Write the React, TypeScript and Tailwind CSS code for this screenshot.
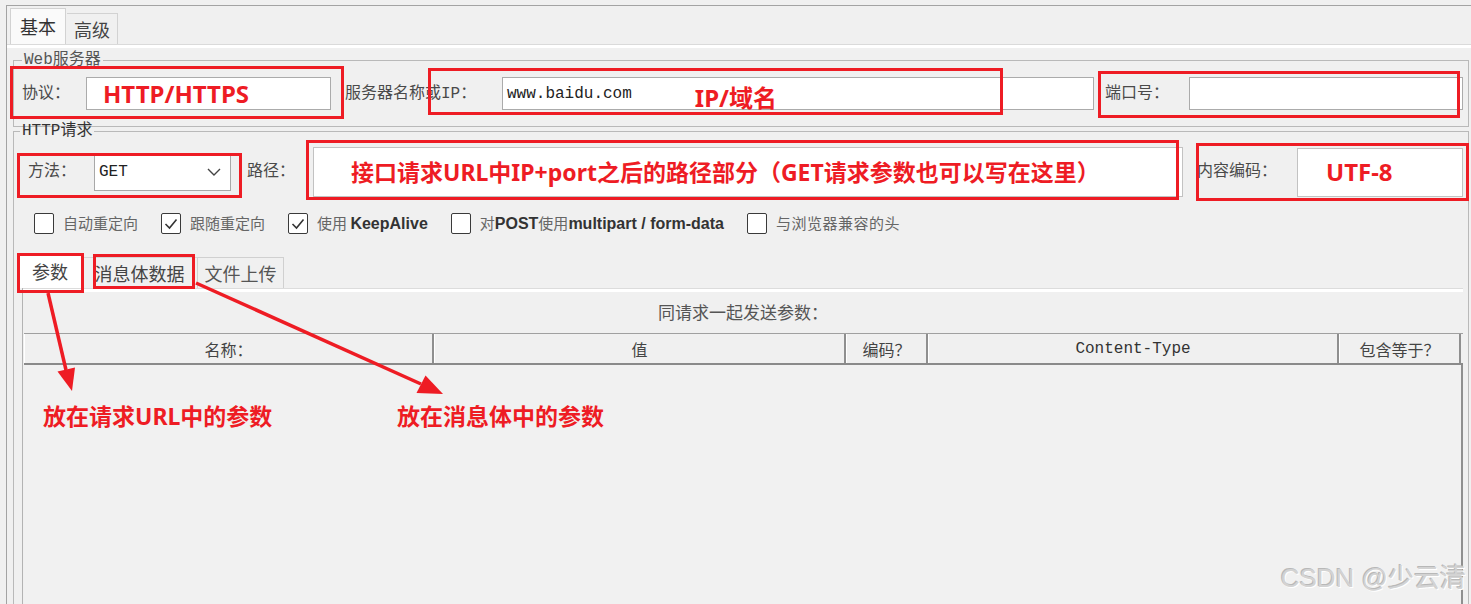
import React from "react";

const UI = "font-['Liberation_Mono','Noto_Sans_CJK_SC',monospace]";
const CJK = "font-['Noto_Sans_CJK_SC',sans-serif]";
const ANN = "font-['Noto_Sans','Noto_Sans_CJK_SC',sans-serif] font-bold text-[#ee1c24]";
const LAT = "font-['Liberation_Sans','Noto_Sans_CJK_SC',sans-serif] font-bold text-[#333]";

function Check({ checked }: { checked?: boolean }) {
  return (
    <div className="w-[20px] h-[21px] border-[1.5px] border-[#3a3a3a] bg-white rounded-[2px] flex items-center justify-center shrink-0">
      {checked && (
        <svg width="16" height="16" viewBox="0 0 16 16">
          <path d="M2.5 8 L6.5 12 L13.5 3.5" fill="none" stroke="#333" strokeWidth="1.6" />
        </svg>
      )}
    </div>
  );
}

export default function App() {
  return (
    <div className={`relative w-[1471px] h-[604px] overflow-hidden bg-[#f0f0f0] ${CJK}`}>
      <div className="ml-[6px] mt-[5px] h-[620px] border-l border-t border-[#a3a3a3] flex flex-col">
        {/* top tabs */}
        <div className="flex items-end pl-[3px] h-[38px] shrink-0">
          <div className="w-[56px] h-[36px] bg-[#fafafa] border-l border-t border-r border-[#d2d2d2] flex items-center justify-center text-[18px] text-[#333]">
            基本
          </div>
          <div className="ml-[1px] w-[51px] h-[31px] bg-[#f0f0f0] border-t border-r border-[#d2d2d2] flex items-center justify-center text-[18px] text-[#444]">
            高级
          </div>
        </div>
        {/* main panel */}
        <div className="flex-1 flex flex-col border-t border-[#dadada]">
          <div className="h-[3px] bg-white shrink-0" />
          {/* Web server fieldset */}
          <fieldset className="mt-[4px] ml-[6px] w-[1456px] border border-[#b9b9b9] pl-[8px] pb-[16px] shrink-0">
            <legend className={`px-[2px] text-[16px] leading-[16px] text-[#555] ${UI}`}>Web服务器</legend>
            <div className="flex items-center pt-[9px] h-[42px] text-[16px] text-[#4a4a4a]">
              <div className={`w-[64px] ${UI}`}>协议：</div>
              <div className="w-[245px] h-[33px] bg-white border border-[#ababab] flex items-center pl-[16px]">
                <span className={`text-[24px] leading-none ${ANN}`}>HTTP/HTTPS</span>
              </div>
              <div className={`ml-[14px] w-[157px] ${UI}`}>服务器名称或IP：</div>
              <div className="w-[592px] h-[33px] bg-white border border-[#ababab] flex items-center pl-[4px]">
                <span className={`text-[16px] text-[#222] ${UI}`}>www.baidu.com</span>
                <span className={`ml-[63px] mt-[8px] text-[24px] leading-none ${ANN}`}>IP/域名</span>
              </div>
              <div className={`ml-[11px] w-[84px] ${UI}`}>端口号：</div>
              <div className="w-[274px] h-[33px] bg-white border border-[#ababab]" />
            </div>
          </fieldset>
          {/* HTTP request fieldset */}
          <fieldset className="-mt-[4px] ml-[6px] w-[1456px] h-[520px] border border-[#b9b9b9] pl-[4px]">
            <legend className={`ml-[2px] px-[2px] text-[16px] leading-[16px] text-[#333] ${UI}`}>HTTP请求</legend>
            <div className="flex items-center pt-[8px] h-[58px] text-[16px] text-[#4a4a4a]">
              <div className={`ml-[10px] w-[66px] ${UI}`}>方法：</div>
              <div className="w-[137px] h-[38px] bg-white border border-[#a8a8a8] flex items-center justify-between pl-[4px] pr-[9px]">
                <span className={`text-[16px] text-[#222] ${UI}`}>GET</span>
                <svg width="14" height="8" viewBox="0 0 14 8">
                  <path d="M1 1 L7 7 L13 1" fill="none" stroke="#444" strokeWidth="1.4" />
                </svg>
              </div>
              <div className={`ml-[16px] w-[66px] ${UI}`}>路径：</div>
              <div className="w-[870px] h-[50px] bg-white border border-[#c2c2c2] flex items-center pl-[37px]">
                <span className={`text-[23px] leading-none ${ANN}`}>接口请求URL中IP+port之后的路径部分（GET请求参数也可以写在这里）</span>
              </div>
              <div className={`ml-[14px] w-[100px] ${UI}`}>内容编码：</div>
              <div className="w-[166px] h-[49px] bg-white border border-[#c2c2c2] flex items-center pl-[28px]">
                <span className={`text-[24px] leading-none ${ANN}`}>UTF-8</span>
              </div>
            </div>
            {/* checkboxes */}
            <div className="mt-[16px] h-[21px] pl-[16px] flex items-center gap-[23px] text-[15px] text-[#666]">
              <div className="flex items-center gap-[9px]">
                <Check />
                <span>自动重定向</span>
              </div>
              <div className="flex items-center gap-[9px]">
                <Check checked />
                <span>跟随重定向</span>
              </div>
              <div className="flex items-center gap-[9px]">
                <Check checked />
                <span>
                  使用 <span className={`text-[16px] ${LAT}`}>KeepAlive</span>
                </span>
              </div>
              <div className="flex items-center gap-[9px]">
                <Check />
                <span>
                  对<span className={`text-[16px] ${LAT}`}>POST</span>使用<span className={`text-[16px] ${LAT}`}>multipart / form-data</span>
                </span>
              </div>
              <div className="flex items-center gap-[9px]">
                <Check />
                <span className="tracking-[0.5px]">与浏览器兼容的头</span>
              </div>
            </div>
            {/* inner tabs */}
            <div className="mt-[21px] h-[33px] flex items-end text-[18px]">
              <div className="w-[64px] h-[34px] bg-white border-l border-t border-r border-[#d0d0d0] flex items-center justify-center text-[#444]">
                参数
              </div>
              <div className="w-[115px] h-[31px] bg-[#f0f0f0] border-t border-[#d6d6d6] flex items-center justify-center text-[#444]">
                消息体数据
              </div>
              <div className="w-[87px] h-[31px] bg-[#f0f0f0] border-l border-t border-r border-[#d0d0d0] flex items-center justify-center text-[#555]">
                文件上传
              </div>
            </div>
            {/* inner panel */}
            <div className="ml-[4px] w-[1441px] h-[340px] flex flex-col border-l border-[#b3b3b3]">
              <div className="h-[4px] bg-white border-t border-[#dcdcdc] shrink-0" />
              <div className="mt-[9px] h-[22px] leading-[22px] text-center text-[17px] text-[#555] shrink-0">同请求一起发送参数：</div>
              <div className="mt-[10px] ml-[1px] w-[1439px] flex-1 flex flex-col">
                <div className="flex shrink-0 border-t border-[#a0a0a0] border-b-[2px] border-b-[#8a8a8a] h-[32px] text-[16px] text-[#444]">
                  <div className="w-[410px] border-l border-l-white border-r-[2px] border-r-[#8f8f8f] flex items-center justify-center">名称：</div>
                  <div className="w-[412px] border-l border-l-white border-r-[2px] border-r-[#8f8f8f] flex items-center justify-center">值</div>
                  <div className="w-[82px] border-l border-l-white border-r-[2px] border-r-[#8f8f8f] flex items-center justify-center">编码？</div>
                  <div className={`w-[411px] border-l border-l-white border-r-[2px] border-r-[#8f8f8f] flex items-center justify-center text-[#333] ${UI}`}>Content-Type</div>
                  <div className="w-[122px] border-l border-l-white border-r-[2px] border-r-[#8f8f8f] flex items-center justify-center">包含等于？</div>
                </div>
                <div className="flex-1 border-r-[2px] border-[#8f8f8f] bg-[#f1f1f1] pl-[19px] pt-[36px] flex items-start">
                  <div className="w-[354px]">
                    <span className={`text-[23px] leading-[30px] ${ANN}`}>放在请求URL中的参数</span>
                  </div>
                  <span className={`text-[23px] leading-[30px] ${ANN}`}>放在消息体中的参数</span>
                </div>
              </div>
            </div>
          </fieldset>
        </div>
      </div>

      {/* annotation red boxes */}
      <div className="absolute left-[10px] top-[66px] w-[334px] h-[53px] border-[3px] border-[#ee1c24]" />
      <div className="absolute left-[428px] top-[68px] w-[575px] h-[47px] border-[3px] border-[#ee1c24]" />
      <div className="absolute left-[1098px] top-[71px] w-[362px] h-[47px] border-[3px] border-[#ee1c24]" />
      <div className="absolute left-[17px] top-[153px] w-[225px] h-[45px] border-[3px] border-[#ee1c24]" />
      <div className="absolute left-[306px] top-[140px] w-[873px] h-[60px] border-[3px] border-[#ee1c24]" />
      <div className="absolute left-[1196px] top-[143px] w-[273px] h-[58px] border-[3px] border-[#ee1c24]" />
      <div className="absolute left-[17px] top-[253px] w-[67px] h-[40px] border-[3px] border-[#ee1c24]" />
      <div className="absolute left-[93px] top-[254px] w-[102px] h-[35px] border-[3px] border-[#ee1c24]" />

      {/* arrows */}
      <svg className="absolute left-0 top-0 pointer-events-none" width="1471" height="604" viewBox="0 0 1471 604">
        <line x1="48" y1="293" x2="66" y2="370" stroke="#ee1c24" strokeWidth="3.5" />
        <polygon points="72,391 57.5,371.5 75,367.5" fill="#ee1c24" />
        <line x1="196" y1="283" x2="421" y2="384" stroke="#ee1c24" strokeWidth="3.5" />
        <polygon points="443,394 416.5,393 425.5,375.5" fill="#ee1c24" />
      </svg>

      {/* watermark */}
      <div className="absolute right-[5px] bottom-[11px] text-[26px] leading-[30px] text-[#d3d3d3] font-['Liberation_Sans','Noto_Sans_CJK_SC',sans-serif] [text-shadow:-1px_-1px_0_#b8b8b8,1px_1px_0_#ffffff]">
        CSDN @少云清
      </div>
    </div>
  );
}
